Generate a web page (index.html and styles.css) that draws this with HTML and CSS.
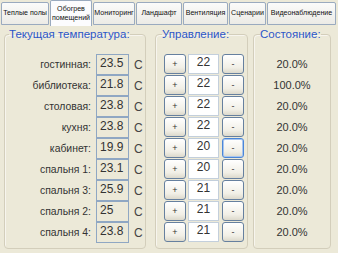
FILE: index.html
```html
<!DOCTYPE html>
<html lang="ru">

<head>
    <meta charset="UTF-8">
    <meta name="viewport" content="width=device-width, initial-scale=1.0">
    <title>Отопление</title>
    <link rel="stylesheet" href="styles.css">
</head>

<body>
    <div class="tabs">
        <div class="tab w1">Теплые полы</div>
        <div class="tab w2 active">Обогрев<br>помещений</div>
        <div class="tab w3">Мониторинг</div>
        <div class="tab w4">Ландшафт</div>
        <div class="tab w5">Вентиляция</div>
        <div class="tab w6">Сценарии</div>
        <div class="tab w7">Видеонаблюдение</div>
    </div>

    <div class="content">
        <!-- текущая температура -->
        <fieldset class="panel temps">
            <legend>Текущая температура:</legend>
            <div class="row"><span class="name">гостинная:</span><span class="val">23.5</span><span class="unit">C</span></div>
            <div class="row"><span class="name">библиотека:</span><span class="val">21.8</span><span class="unit">C</span></div>
            <div class="row"><span class="name">столовая:</span><span class="val">23.8</span><span class="unit">C</span></div>
            <div class="row"><span class="name">кухня:</span><span class="val">23.8</span><span class="unit">C</span></div>
            <div class="row"><span class="name">кабинет:</span><span class="val">19.9</span><span class="unit">C</span></div>
            <div class="row"><span class="name">спальня 1:</span><span class="val">23.1</span><span class="unit">C</span></div>
            <div class="row"><span class="name">спальня 3:</span><span class="val">25.9</span><span class="unit">C</span></div>
            <div class="row"><span class="name">спальня 2:</span><span class="val">25</span><span class="unit">C</span></div>
            <div class="row"><span class="name">спальня 4:</span><span class="val">23.8</span><span class="unit">C</span></div>
        </fieldset>

        <!-- управление -->
        <fieldset class="panel controls">
            <legend>Управление:</legend>
            <div class="ctl"><button>+</button><span class="set">22</span><button>-</button></div>
            <div class="ctl"><button>+</button><span class="set">22</span><button>-</button></div>
            <div class="ctl"><button>+</button><span class="set">22</span><button>-</button></div>
            <div class="ctl"><button>+</button><span class="set">22</span><button>-</button></div>
            <div class="ctl"><button>+</button><span class="set">20</span><button class="hot">-</button></div>
            <div class="ctl"><button>+</button><span class="set">20</span><button>-</button></div>
            <div class="ctl"><button>+</button><span class="set">21</span><button>-</button></div>
            <div class="ctl"><button>+</button><span class="set">21</span><button>-</button></div>
            <div class="ctl"><button>+</button><span class="set">21</span><button>-</button></div>
        </fieldset>

        <!-- состояние -->
        <fieldset class="panel state">
            <legend>Состояние:</legend>
            <div class="pct">20.0%</div>
            <div class="pct">100.0%</div>
            <div class="pct">20.0%</div>
            <div class="pct">20.0%</div>
            <div class="pct">20.0%</div>
            <div class="pct">20.0%</div>
            <div class="pct">20.0%</div>
            <div class="pct">20.0%</div>
            <div class="pct">20.0%</div>
        </fieldset>
    </div>
</body>

</html>
```

FILE: styles.css
```css
/* styles.css */
body {
    margin: 0;
    width: 338px;
    height: 253px;
    overflow: hidden;
    background: #ece9d8;
    font-family: "Liberation Sans", Arial, sans-serif;
    color: #222;
}

.tabs {
    display: flex;
    align-items: flex-end;
    gap: 1px;
    height: 26px;
    padding-left: 1px;
}

.tab {
    box-sizing: border-box;
    height: 23px;
    margin-bottom: 1px;
    display: flex;
    align-items: center;
    justify-content: center;
    text-align: center;
    white-space: nowrap;
    font-size: 7.1px;
    line-height: 9px;
    color: #111;
    border: 1px solid #9aaabf;
    border-radius: 2px 2px 0 0;
    background: linear-gradient(#fbfbfa, #ecebe6);
}

.tab.active {
    height: 26px;
    margin-bottom: 0;
    background: #fcfcfe;
    border-bottom: none;
}

.w1 { width: 48px; }
.w2 { width: 42px; }
.w3 { width: 42px; }
.w4 { width: 46px; }
.w5 { width: 45px; }
.w6 { width: 37px; }
.w7 { width: 69px; }

.content {
    display: flex;
    padding: 1px 0 0 4px;
}

.panel {
    margin: 0;
    padding: 12px 0 0;
    height: 222px;
    box-sizing: border-box;
    border: 1px solid #d3cebb;
    border-radius: 4px;
    box-shadow: inset 1px 1px 0 #f7f5ee;
    min-width: 0;
}

.panel legend {
    padding: 0;
    white-space: nowrap;
    font-size: 11.5px;
    line-height: 15px;
    color: #2c56c8;
}

.temps {
    width: 142px;
}

.temps legend {
    margin-left: 4px;
}

.controls {
    width: 93px;
    margin-left: 9px;
    padding-left: 8px;
}

.controls legend {
    margin-left: -2px;
}

.state {
    width: 78px;
    margin-left: 5px;
}

.state legend {
    margin-left: 6px;
}

.row {
    display: grid;
    grid-template-columns: 91px 33px 1fr;
    height: 21px;
    align-items: center;
    font-size: 10.4px;
}

.name {
    text-align: right;
    padding-right: 5px;
    color: #333;
}

.val {
    box-sizing: border-box;
    height: 21px;
    padding: 2px 0 0 3px;
    border: 1px solid #8fa7c3;
    font-size: 12px;
    line-height: 13px;
    color: #333;
}

.unit {
    padding-left: 5px;
    font-size: 12px;
    color: #444;
}

.ctl {
    display: flex;
    align-items: center;
    height: 20px;
    margin-bottom: 1px;
}

.ctl button {
    box-sizing: border-box;
    width: 22px;
    height: 20px;
    padding: 0;
    border: 1px solid #66809f;
    border-radius: 3px;
    background: linear-gradient(#ffffff, #f1efe6 70%, #dcd9cc);
    font-family: "Liberation Sans", Arial, sans-serif;
    font-size: 9px;
    color: #333;
}

.ctl button.hot {
    border-color: #4a86d8;
    box-shadow: inset 0 0 0 1px #a9c6ee;
}

.set {
    box-sizing: border-box;
    width: 31px;
    height: 20px;
    margin: 0 3px 0 2px;
    padding-top: 1px;
    background: #fff;
    border: 1px solid #c3cfdc;
    text-align: center;
    font-size: 12px;
    line-height: 13px;
    color: #333;
}

.pct {
    height: 21px;
    line-height: 21px;
    text-align: center;
    font-size: 11px;
    color: #333;
}
```
